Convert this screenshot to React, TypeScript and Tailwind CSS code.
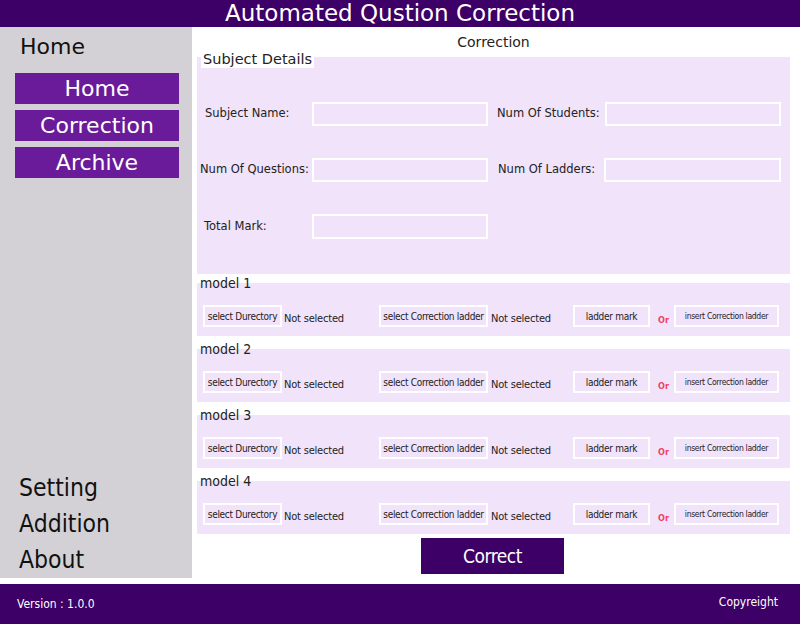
import React from "react";

const cond = "font-['DejaVu_Sans_Condensed','DejaVu_Sans',sans-serif]";
const sans = "font-['DejaVu_Sans',sans-serif]";

function Box({ className = "" }: { className?: string }) {
  return <div className={`h-[24px] border-2 border-white bg-[#f1e3f9] ${className}`} />;
}

function SmallBtn({ children, className = "" }: { children: React.ReactNode; className?: string }) {
  return (
    <div
      className={`flex h-[22px] items-center justify-center border-2 border-white bg-[#f1e3f9] tracking-[-0.3px] text-[#222] ${className}`}
    >
      {children}
    </div>
  );
}

function Model({ n }: { n: number }) {
  return (
    <div className="flex flex-col">
      <div className="relative z-10 -mb-[8px] h-[15px] pl-[3px] text-[14px] leading-[15px] text-[#222]">
        model {n}
      </div>
      <div className="flex h-[53px] items-end bg-[#f1e3f9] pb-[9px] pl-[6px]">
        <SmallBtn className="w-[79px] text-[10px]">select Durectory</SmallBtn>
        <span className="ml-[2px] w-[95px] text-[11px] tracking-[-0.2px] text-[#222]">Not selected</span>
        <SmallBtn className="w-[109px] text-[10px]">select Correction ladder</SmallBtn>
        <span className="ml-[3px] w-[82px] text-[11px] tracking-[-0.2px] text-[#222]">Not selected</span>
        <SmallBtn className="w-[77px] text-[10px]">ladder mark</SmallBtn>
        <span className="ml-[8px] w-[16px] text-[9px] font-bold text-[#f0405e]">Or</span>
        <SmallBtn className="w-[105px] text-[8.5px]">insert Correction ladder</SmallBtn>
      </div>
    </div>
  );
}

export default function App() {
  return (
    <div className={`flex h-[624px] w-[800px] flex-col bg-white ${cond}`}>
      <header className={`flex h-[27px] items-center justify-center bg-[#3d0066] text-[23px] leading-[27px] text-white ${sans}`}>
        Automated Qustion Correction
      </header>

      <div className="flex h-[557px]">
        <aside className="flex h-[551px] w-[192px] flex-col justify-between bg-[#d3d1d5]">
          <div className={`flex flex-col ${sans}`}>
            <div className="h-[40px] pl-[20px] pt-[6px] text-[22px] leading-[28px] text-[#111]">Home</div>
            <nav className="mt-[6px] flex flex-col gap-[6px] px-[15px] pr-[13px]">
              {["Home", "Correction", "Archive"].map((t) => (
                <div
                  key={t}
                  className="flex h-[31px] items-center justify-center bg-[#6a1b9a] text-[22px] text-white"
                >
                  {t}
                </div>
              ))}
            </nav>
          </div>
          <div className="flex flex-col pl-[19px] text-[24.5px] leading-[36px] text-[#111]">
            <span>Setting</span>
            <span>Addition</span>
            <span>About</span>
          </div>
        </aside>

        <main className="flex flex-1 flex-col pl-[5px] pr-[10px]">
          <div className={`h-[23px] pt-[7px] text-center text-[14px] leading-[16px] text-[#222] ${sans}`}>Correction</div>

          <div className={`relative z-10 -mb-[11px] ml-[4px] h-[18px] w-fit bg-white px-[2px] text-[14.5px] leading-[18px] text-[#222] ${sans}`}>
            Subject Details
          </div>
          <section className={`flex h-[217px] flex-col gap-[32px] bg-[#f1e3f9] pt-[45px] text-[11.5px] text-[#222] ${sans}`}>
            <div className="flex items-center">
              <span className="w-[115px] pl-[8px]">Subject Name:</span>
              <Box className="w-[176px]" />
              <span className="w-[117px] pl-[9px]">Num Of Students:</span>
              <Box className="w-[176px]" />
            </div>
            <div className="flex items-center">
              <span className="w-[115px] pl-[3px]">Num Of Questions:</span>
              <Box className="w-[176px]" />
              <span className="w-[116px] pl-[10px]">Num Of Ladders:</span>
              <Box className="w-[177px]" />
            </div>
            <div className="flex items-center">
              <span className="w-[115px] pl-[7px]">Total Mark:</span>
              <Box className="h-[25px] w-[176px]" />
            </div>
          </section>

          <div className="mt-[2px] flex flex-col gap-[6px]">
            {[1, 2, 3, 4].map((n) => (
              <Model key={n} n={n} />
            ))}
          </div>

          <div className="mt-[4px] flex justify-center">
            <button className="ml-[-2px] h-[36px] w-[143px] bg-[#3d0066] text-[19px] tracking-[-0.5px] text-white">
              Correct
            </button>
          </div>
        </main>
      </div>

      <footer className="flex h-[40px] items-center justify-between bg-[#3d0066] pl-[17px] pr-[22px] text-[12px] text-white">
        <span>Version : 1.0.0</span>
        <span className="-mt-[4px]">Copyreight</span>
      </footer>
    </div>
  );
}
